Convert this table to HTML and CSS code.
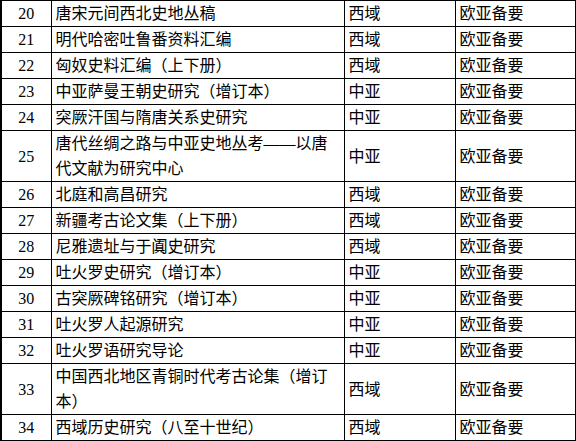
FILE: index.html
```html
<!DOCTYPE html>
<html lang="zh">
<head>
<meta charset="utf-8">
<link rel="stylesheet" href="styles.css">
</head>
<body>
<table class="list">
<colgroup>
<col class="c-no"><col class="c-title"><col class="c-region"><col class="c-series">
</colgroup>
<tbody>
<tr><td class="no">20</td><td>唐宋元间西北史地丛稿</td><td>西域</td><td>欧亚备要</td></tr>
<tr><td class="no">21</td><td>明代哈密吐鲁番资料汇编</td><td>西域</td><td>欧亚备要</td></tr>
<tr><td class="no">22</td><td>匈奴史料汇编（上下册）</td><td>西域</td><td>欧亚备要</td></tr>
<tr><td class="no">23</td><td>中亚萨曼王朝史研究（增订本）</td><td>中亚</td><td>欧亚备要</td></tr>
<tr><td class="no">24</td><td>突厥汗国与隋唐关系史研究</td><td>中亚</td><td>欧亚备要</td></tr>
<tr><td class="no">25</td><td>唐代丝绸之路与中亚史地丛考——以唐代文献为研究中心</td><td>中亚</td><td>欧亚备要</td></tr>
<tr><td class="no">26</td><td>北庭和高昌研究</td><td>西域</td><td>欧亚备要</td></tr>
<tr><td class="no">27</td><td>新疆考古论文集（上下册）</td><td>西域</td><td>欧亚备要</td></tr>
<tr><td class="no">28</td><td>尼雅遗址与于阗史研究</td><td>西域</td><td>欧亚备要</td></tr>
<tr><td class="no">29</td><td>吐火罗史研究（增订本）</td><td>中亚</td><td>欧亚备要</td></tr>
<tr><td class="no">30</td><td>古突厥碑铭研究（增订本）</td><td>中亚</td><td>欧亚备要</td></tr>
<tr><td class="no">31</td><td>吐火罗人起源研究</td><td>中亚</td><td>欧亚备要</td></tr>
<tr><td class="no">32</td><td>吐火罗语研究导论</td><td>中亚</td><td>欧亚备要</td></tr>
<tr><td class="no">33</td><td>中国西北地区青铜时代考古论集（增订本）</td><td>西域</td><td>欧亚备要</td></tr>
<tr><td class="no">34</td><td>西域历史研究（八至十世纪）</td><td>西域</td><td>欧亚备要</td></tr>
</tbody>
</table>
</body>
</html>
```

FILE: styles.css
```css
html, body {
  margin: 0;
  padding: 0;
  background: #ffffff;
}

.list {
  border-collapse: collapse;
  table-layout: fixed;
  width: 574px;
  font-family: "Liberation Serif", "Noto Sans CJK SC", serif;
  font-size: 16px;
  color: #000000;
}

.c-no { width: 50px; }
.c-title { width: 293px; }
.c-region { width: 111px; }
.c-series { width: 120px; }

.list td {
  border: 1px solid #000000;
  padding: 0 4px;
  line-height: 25px;
  vertical-align: middle;
  text-align: left;
  word-break: break-all;
}

.list td:first-child {
  border-left-width: 2px;
}

.list td.no {
  text-align: center;
  padding: 0;
}
```
